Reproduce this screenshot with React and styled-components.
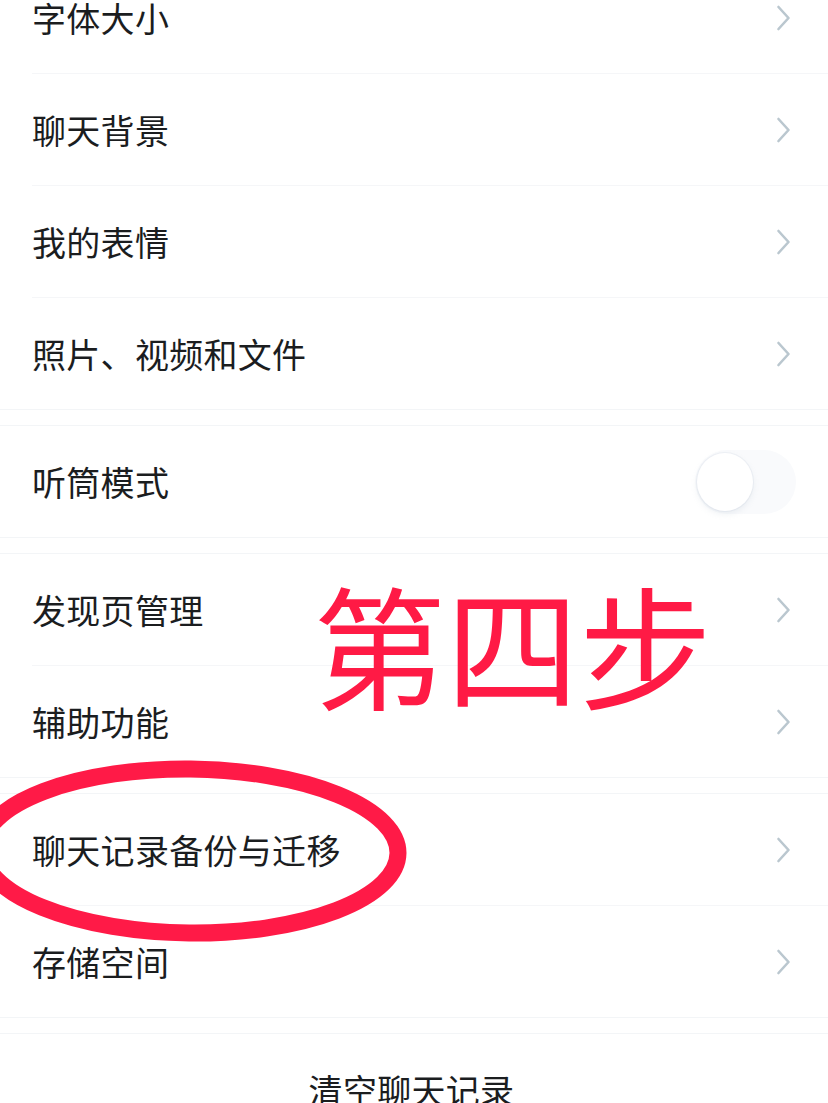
import React from 'react';
import styled, { createGlobalStyle } from 'styled-components';

const GlobalStyle = createGlobalStyle`
  html, body {
    margin: 0;
    padding: 0;
    background: #ffffff;
    overflow: hidden;
  }
  body {
    font-family: "Noto Sans CJK SC", "Noto Sans", sans-serif;
    -webkit-font-smoothing: antialiased;
  }
`;

const Page = styled.div`
  position: relative;
  width: 828px;
  height: 1103px;
  overflow: hidden;
  background: #ffffff;
`;

const List = styled.div`
  display: flex;
  flex-direction: column;
  gap: 15px;
  margin-top: -39px;
`;

const Group = styled.div`
  display: flex;
  flex-direction: column;
  background: #ffffff;
  border-top: 1px solid #f3f5f7;
  border-bottom: 1px solid #f3f5f7;
`;

const Row = styled.div`
  position: relative;
  display: flex;
  align-items: center;
  justify-content: ${props => (props.center ? 'center' : 'space-between')};
  height: 112px;
  box-sizing: border-box;
  padding: 0 37px 0 32px;

  &:not(:last-child)::after {
    content: '';
    position: absolute;
    left: 32px;
    right: 0;
    bottom: 0;
    height: 1px;
    background: #f5f6f8;
  }

  &:last-child {
    height: 111px;
  }
`;

const Label = styled.span`
  font-size: 34px;
  line-height: 1;
  color: #1b1d1f;
  letter-spacing: 0.3px;
`;

const Chevron = () => (
  <svg width="15" height="26" viewBox="0 0 15 26" fill="none">
    <path
      d="M2.5 2 L12.5 13 L2.5 24"
      stroke="#bac7cf"
      strokeWidth="2.6"
      strokeLinecap="round"
      strokeLinejoin="round"
    />
  </svg>
);

const SwitchTrack = styled.div`
  position: relative;
  width: 101px;
  height: 64px;
  margin-right: -5px;
  border-radius: 32px;
  background: #f9fafc;
  display: flex;
  align-items: center;
  padding-left: 2px;
  box-sizing: border-box;
`;

const SwitchKnob = styled.div`
  width: 56px;
  height: 58px;
  border-radius: 50%;
  background: #ffffff;
  box-shadow: 0 3px 6px rgba(150, 165, 185, 0.16), 0 0 0 1px rgba(215, 222, 232, 0.3);
`;

const Switch = () => (
  <SwitchTrack>
    <SwitchKnob />
  </SwitchTrack>
);

const StepLabel = styled.div`
  position: absolute;
  left: 313px;
  top: 576px;
  font-size: 133px;
  line-height: 1;
  font-weight: 400;
  color: #ff1a45;
  white-space: nowrap;
  pointer-events: none;
`;

const Circle = styled.svg`
  position: absolute;
  left: 0;
  top: 750px;
  pointer-events: none;
`;

const groups = [
  ['字体大小', '聊天背景', '我的表情', '照片、视频和文件'],
  ['听筒模式'],
  ['发现页管理', '辅助功能'],
  ['聊天记录备份与迁移', '存储空间'],
];

const App = () => {
  return (
    <Page>
      <GlobalStyle />
      <List>
        {groups.map((items, gi) => (
          <Group key={gi}>
            {items.map(item => (
              <Row key={item}>
                <Label>{item}</Label>
                {item === '听筒模式' ? <Switch /> : <Chevron />}
              </Row>
            ))}
          </Group>
        ))}
        <Group>
          <Row center>
            <Label>清空聊天记录</Label>
          </Row>
        </Group>
      </List>

      <StepLabel>第四步</StepLabel>

      <Circle width="430" height="210" viewBox="0 0 430 210">
        <ellipse
          cx="190"
          cy="101"
          rx="208"
          ry="82"
          fill="none"
          stroke="#ff1a47"
          strokeWidth="17"
          transform="rotate(0.6 190 101)"
        />
      </Circle>
    </Page>
  );
};

export default App;
